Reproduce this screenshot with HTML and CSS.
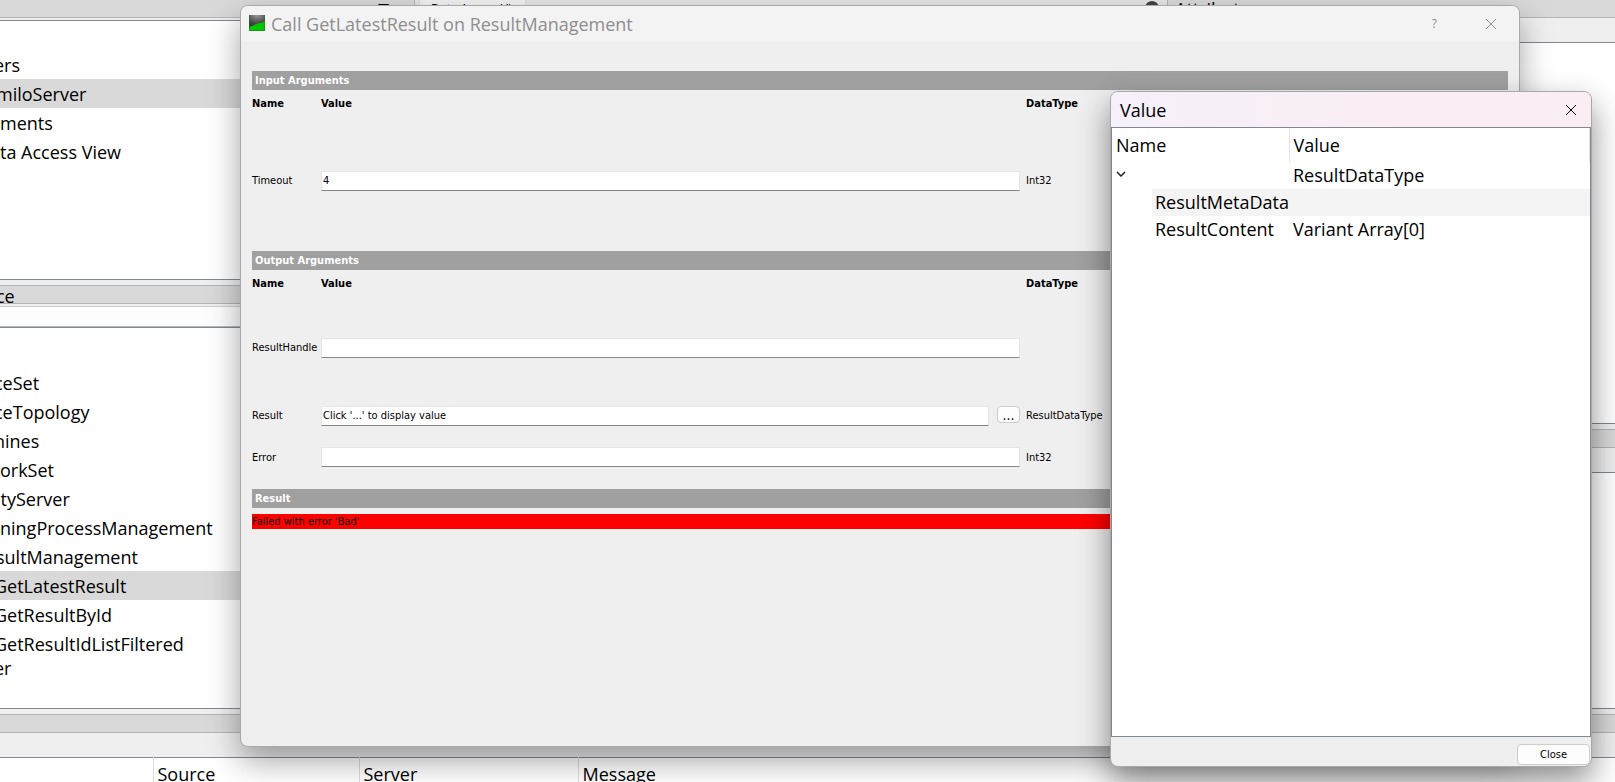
FILE: index.html
```html
<!DOCTYPE html>
<html lang="en">
<head>
<meta charset="utf-8">
<title>Call GetLatestResult on ResultManagement</title>
<link rel="stylesheet" href="styles.css">
</head>
<body>
<div class="app">
  <div class="workspace">
    <aside class="dock dock-left">
      <div class="dock-title"><span class="dock-buttons">❐ ✕</span></div>
      <ul class="pane tree project-tree">
        <li class="cut-mid">ers</li>
        <li class="selected cut">miloServer</li>
        <li>ments</li>
        <li>ta Access View</li>
      </ul>
      <div class="dock-title"><span class="cut">ce</span></div>
      <div class="filter-bar"></div>
      <ul class="pane tree address-tree">
        <li class="cut-mid">ceSet</li>
        <li class="cut-mid">ceTopology</li>
        <li class="cut-mid">hines</li>
        <li class="cut-wide">workSet</li>
        <li class="cut">ityServer</li>
        <li>ningProcessManagement</li>
        <li class="cut">sultManagement</li>
        <li class="selected cut-mid">GetLatestResult</li>
        <li class="cut-mid">GetResultById</li>
        <li class="cut-mid">GetResultIdListFiltered</li>
        <li class="short cut-mid">er</li>
      </ul>
    </aside>
    <main class="center">
      <div class="tab-bar"><div class="tab">Data Access View</div><span class="tab-close">✕</span></div>
    </main>
    <aside class="dock dock-right">
      <div class="dock-title">Attributes</div>
      <div class="toolbar"></div>
      <div class="pane attributes"></div>
      <div class="dock-title"></div>
      <div class="toolbar"></div>
      <div class="pane references"></div>
    </aside>
  </div>
  <section class="log">
    <div class="dock-title"></div>
    <div class="toolbar"></div>
    <table class="log-table">
      <thead><tr><th class="col-time"></th><th class="col-source">Source</th><th class="col-server">Server</th><th>Message</th></tr></thead>
    </table>
  </section>
</div>

<section class="window call-window">
  <header class="title-bar">
    <svg class="app-icon" viewBox="0 0 16 16"><defs><radialGradient id="g" cx="50%" cy="0" r="80%"><stop offset="0" stop-color="#999"/><stop offset="1" stop-color="#3c3c3c"/></radialGradient></defs><path fill="#00c800" d="M0 0h16v16H0z"/><path fill="url(#g)" d="M0 0h16v6Q14 8 11 8Q7 8.500 5 10Q3 11.500 0 12z"/><path fill="none" stroke="#246b24" stroke-opacity=".5" d="M.5 0v15.500h15V0"/></svg>
    <h1>Call GetLatestResult on ResultManagement</h1>
    <button class="caption-button help" aria-label="Help">?</button>
    <button class="caption-button" aria-label="Close window"><svg viewBox="0 0 10 10"><path d="M0 0l10 10M10 0L0 10"/></svg></button>
  </header>
  <form class="call-form">
    <h2>Input Arguments</h2>
    <div class="arguments head"><b>Name</b><b>Value</b><b>DataType</b><b>Description</b></div>
    <div class="arguments tall"><label for="timeout">Timeout</label><input id="timeout" value="4"><span>Int32</span></div>
    <h2>Output Arguments</h2>
    <div class="arguments head"><b>Name</b><b>Value</b><b>DataType</b><b>Description</b></div>
    <div class="arguments medium"><label for="handle">ResultHandle</label><input id="handle"></div>
    <div class="arguments low"><label for="result">Result</label><div class="with-button"><input id="result" value="Click '...' to display value"><button type="button" class="more">...</button></div><span>ResultDataType</span></div>
    <div class="arguments low"><label for="error">Error</label><input id="error"><span>Int32</span></div>
    <h2>Result</h2>
    <p class="failure">Failed with error 'Bad'</p>
  </form>
</section>

<section class="window value-window">
  <header class="title-bar">
    <h1>Value</h1>
    <button class="caption-button" aria-label="Close window"><svg viewBox="0 0 10 10"><path d="M0 0l10 10M10 0L0 10"/></svg></button>
  </header>
  <div class="value-pane">
    <table class="value-table">
      <thead><tr><th class="col-name">Name</th><th>Value</th></tr></thead>
      <tbody>
        <tr><td><svg class="chevron" viewBox="0 0 10 6"><path d="M1 1l4 4 4-4"/></svg></td><td>ResultDataType</td></tr>
        <tr class="hover"><td class="child">ResultMetaData</td><td></td></tr>
        <tr><td class="child">ResultContent</td><td>Variant Array[0]</td></tr>
      </tbody>
    </table>
  </div>
  <footer><button class="close">Close</button></footer>
</section>
</body>
</html>
```
FILE: styles.css
```css
* { box-sizing: border-box; }
body {
  margin: 0;
  height: 100vh;
  overflow: hidden;
  position: relative;
  background: #efefef;
  color: #000;
  font: 18px/28px "Open Sans", "Noto Sans", sans-serif;
}
h1, h2, p, ul { margin: 0; padding: 0; font-weight: 400; }
ul { list-style: none; }
button, input { font: inherit; color: inherit; }

.app { height: 100%; display: flex; flex-direction: column; overflow: hidden; }
.workspace { flex: 1; min-height: 0; display: grid; grid-template-columns: 415px 1fr 448px; }
.dock { display: flex; flex-direction: column; min-height: 0; overflow: hidden; }
.dock-title {
  flex: none;
  height: 19px;
  line-height: 20px;
  overflow: hidden;
  background: #d9d9d9;
  border: solid #b4b4b4;
  border-width: 1px 0;
}
.workspace > .dock > .dock-title:first-child { height: 18px; border-top: 0; }
.dock-left > .dock-title:first-child { border-right: 1px solid #b4b4b4; text-align: right; line-height: 16px; }
.dock-right > .dock-title:first-child { border-left: 1px solid #b4b4b4; padding-left: 7px; line-height: 18px; }
.dock-buttons { font-size: 14px; margin-right: 8px; }
.pane { background: #fff; border: solid #828790; border-width: 1px 0; margin-bottom: 5px; }
.toolbar { flex: none; height: 24px; }
.filter-bar { flex: none; height: 21px; margin-top: 2px; background: #fdfdfd; border-top: 1px solid #ccc; border-bottom: 1px solid #b9b9b9; }

.tree li { height: 29px; line-height: 30px; white-space: nowrap; }
.tree .selected { background: #d9d9d9; }
.tree .short { height: 21px; line-height: 21px; }
.cut { text-indent: -4px; }
.cut-mid { text-indent: -6px; }
.cut-wide { text-indent: -14px; }
.dock-title .cut { display: block; }
.project-tree { flex: none; height: 260px; margin-top: 2px; padding-top: 29px; }
.address-tree { flex: 1; padding-top: 40px; }
.attributes { flex: none; height: 382px; }
.references { flex: 1; }

.tab-bar { display: flex; height: 20px; background: #e6e6e6; padding-left: 4px; line-height: 24px; }
.tab { width: 107px; padding-left: 11px; overflow: hidden; background: #f3f3f3; border: solid #ddd; border-width: 0 1px; font-size: 12px; white-space: nowrap; line-height: 18px; }
.tab-close { margin-left: auto; width: 14px; height: 14px; margin-right: 8px; margin-top: 1px; border-radius: 50%; background: #444; color: #fff; font-size: 9px; line-height: 14px; text-align: center; }

.log { flex: none; }
.log-table { width: 100%; height: 24px; table-layout: fixed; border-collapse: collapse; background: #fff; border-top: 1px solid #828790; }
.log-table th { padding: 8px 0 0 4px; height: 24px; line-height: 16px; font-weight: 400; text-align: left; border-left: 1px solid #dcdcdc; }
.log-table .col-time { width: 153px; border-left: 0; }
.log-table .col-source { width: 206px; }
.log-table .col-server { width: 219px; }

.window { position: absolute; display: flex; flex-direction: column; overflow: hidden; border: 1px solid #a9a9a9; border-radius: 8px; background: #efefef; }
.title-bar { flex: none; display: flex; align-items: center; height: 35px; }
.title-bar h1 { flex: 1; font-size: 18px; line-height: 28px; }
.caption-button { padding: 0; border: 0; background: none; line-height: 0; }
.caption-button svg { width: 10px; height: 10px; fill: none; stroke: currentColor; }

.call-window { left: 240px; right: 95px; top: 5px; bottom: 35px; box-shadow: 0 14px 32px rgba(0, 0, 0, .36); font: 11px/15px "DejaVu Sans Condensed", "DejaVu Sans", sans-serif; }
.call-window .title-bar { padding: 0 23px 0 8px; background: #f3f3f3; color: #8e8e8e; font-family: "Open Sans", "Noto Sans", sans-serif; }
.app-icon { width: 16px; height: 16px; margin: 0 6px 2px 0; }
.help { margin-right: 49px; font-size: 12px; }
.call-form { flex: 1; padding: 30px 11px 0 11px; }
.call-form h2 { height: 19px; padding-left: 3px; background: #a0a0a0; color: #fff; font-size: 11px; line-height: 20px; font-weight: 700; }
.arguments { display: grid; grid-template-columns: 69px 1fr 84px 398px; align-items: center; }
.arguments input { min-width: 0; width: calc(100% - 6px); height: 20px; padding: 0 1px; border: 1px solid #e6e6e6; border-bottom-color: #868686; background: #fff; outline: 0; }
.head { height: 26px; }
.tall { height: 135px; padding-bottom: 6px; }
.medium { height: 99px; padding-top: 4px; }
.low { height: 41px; }
.low + .low { height: 42px; }
.with-button { display: flex; align-items: center; padding-right: 6px; }
.arguments .with-button input { flex: 1; margin-right: 8px; }
.more { width: 23px; height: 17px; margin-bottom: 2px; padding: 0; border: 1px solid #ccc; border-radius: 4px; background: #fdfdfd; font-size: 14px; line-height: 12px; }
.low + h2 { margin-top: 11px; }
.failure { margin-top: 6px; background: #f00; }

.value-window { left: 1110px; right: 23px; top: 91px; bottom: 15px; box-shadow: 0 14px 32px rgba(0, 0, 0, .45); }
.value-window .title-bar { padding: 0 15px 0 9px; background: linear-gradient(90deg, #f5f0fa, #faeef4 60%); }
.value-pane { flex: 1; border: 1px solid #828790; background: #fff; }
.value-table { width: 100%; table-layout: fixed; border-collapse: collapse; }
.value-table th { height: 34px; padding: 0 0 0 4px; border-right: 1px solid #e5e5e5; font-weight: 400; text-align: left; }
.value-table td { height: 27px; padding: 0 0 0 4px; line-height: 27px; white-space: nowrap; }
.value-table .col-name { width: 177px; }
.value-table .child { padding-left: 43px; }
.hover td { background: #f4f4f4; }
.hover .child { background: linear-gradient(90deg, #fff 40px, #f4f4f4 40px); }
.chevron { display: block; width: 10px; height: 6px; margin-bottom: 4px; fill: none; stroke: #222; stroke-width: 1.500; }
.value-window footer { flex: none; display: flex; justify-content: flex-end; padding: 7px 1px 1px; }
.close { width: 73px; height: 21px; padding: 0; border: 1px solid #ccc; border-radius: 4px; background: #fdfdfd; font: 11px/19px "DejaVu Sans Condensed", "DejaVu Sans", sans-serif; }
```
